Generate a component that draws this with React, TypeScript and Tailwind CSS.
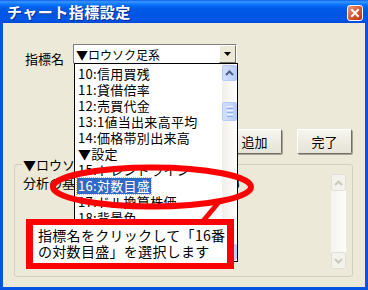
const listItems = [
  "10:信用買残",
  "11:貸借倍率",
  "12:売買代金",
  "13:1値当出来高平均",
  "14:価格帯別出来高",
  "▼設定",
  "15:トレンドライン",
  "16:対数目盛",
  "17:ドル換算株価",
  "18:背景色",
  "19:株価表示",
  "20:注記",
];

function ChevronUp({ color }: { color: string }) {
  return (
    <svg width="9" height="6" viewBox="0 0 9 6">
      <path d="M1 5 L4.5 1.5 L8 5" fill="none" stroke={color} strokeWidth="2" />
    </svg>
  );
}

function ChevronDown({ color }: { color: string }) {
  return (
    <svg width="9" height="6" viewBox="0 0 9 6">
      <path d="M1 1 L4.5 4.5 L8 1" fill="none" stroke={color} strokeWidth="2" />
    </svg>
  );
}

function ListScrollbar() {
  return (
    <div className="flex h-full w-[15px] flex-col bg-[linear-gradient(to_right,#f1efe8,#fefefe)]">
      <div className="mt-[1px] flex h-[16px] items-center justify-center rounded-[2px] border border-[#b6c9f7] bg-[linear-gradient(to_right,#d3e0fd,#b9cdfb)]">
        <ChevronUp color="#4d6185" />
      </div>
      <div className="mt-[21px] flex h-[19px] flex-col items-center justify-center gap-[1px] rounded-[2px] border border-[#b6c9f7] bg-[linear-gradient(to_right,#d3e0fd,#b9cdfb)]">
        <div className="h-[1px] w-[6px] bg-[#eef4fe]" />
        <div className="h-[1px] w-[6px] bg-[#8cb0f8]" />
        <div className="h-[1px] w-[6px] bg-[#eef4fe]" />
        <div className="h-[1px] w-[6px] bg-[#8cb0f8]" />
        <div className="h-[1px] w-[6px] bg-[#eef4fe]" />
        <div className="h-[1px] w-[6px] bg-[#8cb0f8]" />
      </div>
      <div className="flex-1" />
      <div className="mb-[1px] flex h-[16px] items-center justify-center rounded-[2px] border border-[#b6c9f7] bg-[linear-gradient(to_right,#d3e0fd,#b9cdfb)]">
        <ChevronDown color="#4d6185" />
      </div>
    </div>
  );
}

function DisabledScrollbar() {
  return (
    <div className="flex w-[15px] flex-col bg-[linear-gradient(to_right,#f5f4ef,#fdfdfb)]">
      <div className="flex h-[17px] items-center justify-center rounded-[2px] border border-[#e2e0d6] bg-[#f3f2ec]">
        <ChevronUp color="#cac8bb" />
      </div>
      <div className="flex-1" />
      <div className="flex h-[17px] items-center justify-center rounded-[2px] border border-[#e2e0d6] bg-[#f3f2ec]">
        <ChevronDown color="#cac8bb" />
      </div>
    </div>
  );
}

function DropdownList() {
  return (
    <div className="absolute left-0 top-full z-10 flex h-[199px] w-[164px] border border-black bg-white">
      <div className="flex-1 overflow-hidden pl-[3px] pt-[2px]">
        {listItems.map((item) => (
          <div key={item} className="h-[16px] whitespace-nowrap text-[13px] leading-[16px] tracking-[0.3px] text-black">
            {item === "16:対数目盛" ? (
              <span className="-ml-[1px] inline-block bg-[#316ac5] px-[1px] text-white outline-1 outline-dotted outline-[#e0c060]">
                {item}
              </span>
            ) : (
              item
            )}
          </div>
        ))}
      </div>
      <ListScrollbar />
    </div>
  );
}

function XpButton({ label }: { label: string }) {
  return (
    <button className="h-[25px] w-[55px] rounded-[2px] border border-b-[#716f64] border-l-white border-r-[#716f64] border-t-white bg-[linear-gradient(to_bottom,#f6f5ef,#e6e3d6)] text-[13px] leading-none text-black shadow-[1px_1px_0_#a5a294]">
      {label}
    </button>
  );
}

export default function App() {
  return (
    <div className="relative flex h-[290px] w-[368px] flex-col overflow-hidden bg-[#0752e0] font-['Noto_Sans_CJK_JP','Noto_Sans_CJK_SC',sans-serif]">
      {/* title bar */}
      <div className="flex h-[23px] items-center justify-between bg-[linear-gradient(180deg,#0a5fee_0%,#3d95ff_8%,#1a84ff_14%,#0670f8_22%,#005de9_36%,#0055e3_60%,#0056e8_85%,#004ad8_100%)] pl-[7px] pr-[5px]">
        <span className="text-[15px] font-bold leading-none tracking-[0.5px] text-white [text-shadow:1px_1px_0_#0b2a8c]">
          チャート指標設定
        </span>
        <div className="mt-[2px] flex h-[16px] w-[16px] items-center justify-center rounded-[3px] border border-white bg-[linear-gradient(135deg,#f09b7c,#d65a35_50%,#b8380f)]">
          <svg width="10" height="10" viewBox="0 0 10 10">
            <path d="M2 2 L8 8 M8 2 L2 8" stroke="white" strokeWidth="2" strokeLinecap="square" />
          </svg>
        </div>
      </div>

      {/* client area */}
      <div className="mx-[3px] mb-[3px] flex flex-1 flex-col bg-[#ece9d8] text-black">
        <div className="mt-[21px] flex items-start">
          <span className="ml-[22px] mt-[8px] w-[48px] text-[13px] leading-[13px]">指標名</span>
          <div className="relative flex h-[20px] w-[164px] border border-b-white border-l-[#808080] border-r-white border-t-[#808080] bg-white">
            <span className="flex-1 whitespace-nowrap pl-[2px] pt-[4px] text-[12px] leading-[12px]">▼ロウソク足系</span>
            <div className="flex h-[18px] w-[17px] items-center justify-center border border-b-[#716f64] border-l-white border-r-[#716f64] border-t-white bg-[#ece9d8]">
              <svg width="7" height="4" viewBox="0 0 7 4">
                <path d="M0 0 H7 L3.5 4 Z" fill="black" />
              </svg>
            </div>
            <DropdownList />
          </div>
        </div>

        <div className="mt-[64px] flex justify-end gap-[15px] pr-[13px]">
          <XpButton label="追加" />
          <XpButton label="完了" />
        </div>

        <div className="ml-[11px] mr-[12px] mt-[10px] flex h-[113px] flex-col rounded-[3px] border border-[#d0d0bf] pb-[7px] pl-[7px] pr-[6px]">
          <span className="-mt-[7px] w-fit bg-[#ece9d8] px-[1px] text-[13px] leading-[13px]">▼ロウソク足系</span>
          <div className="mt-[3px] flex flex-1">
            <p className="flex-1 whitespace-nowrap pl-[1px] pt-[1px] text-[13px] leading-[16px]">分析の基本となる足の種類を選びます</p>
            <DisabledScrollbar />
          </div>
        </div>
      </div>

      {/* annotation */}
      <svg className="pointer-events-none absolute left-0 top-0 z-20" width="368" height="290" viewBox="0 0 368 290">
        <ellipse cx="152" cy="187" rx="99" ry="19.5" fill="none" stroke="#ff0000" strokeWidth="6" />
        <path d="M219 202 L203 221" stroke="#ff0000" strokeWidth="5" />
      </svg>
      <div className="absolute left-[26px] top-[219px] z-20 h-[50px] w-[208px] border-x-[7px] border-y-[6px] border-[#ff0000] bg-white pl-[5px] pt-[2px] text-[14px] leading-[16px] tracking-[0.3px] text-black">
        指標名をクリックして「16番
        <br />
        の対数目盛」を選択します
      </div>
    </div>
  );
}
